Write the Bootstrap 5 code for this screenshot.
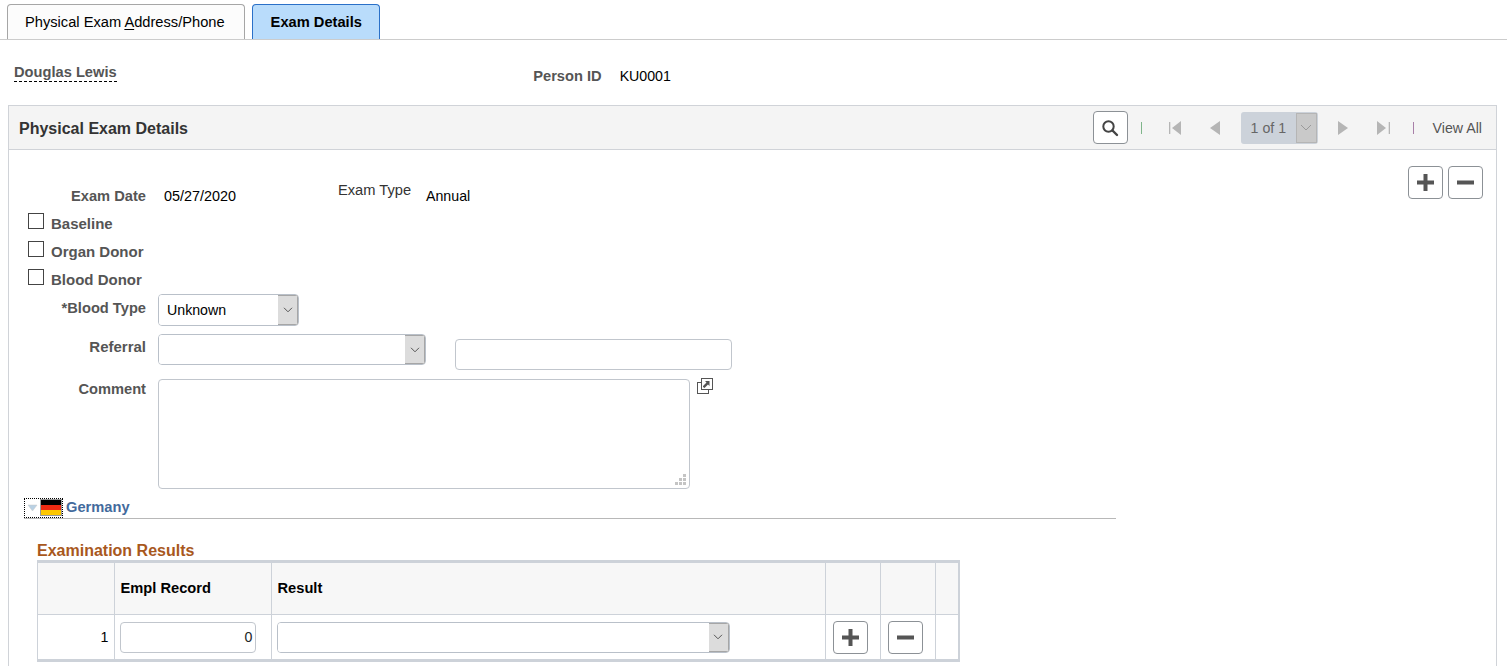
<!DOCTYPE html>
<html lang="en">
<head>
<meta charset="utf-8">
<title>Exam Details</title>
<link href="https://cdn.jsdelivr.net/npm/bootstrap@5.3.0/dist/css/bootstrap.min.css" rel="stylesheet">
<style>
html,body{height:666px;overflow:hidden}
body{font-family:"Liberation Sans",Arial,sans-serif;font-size:14.67px;color:#000;background:#fff;line-height:16px}
.tabbar{height:40px;border-bottom:1px solid #ccc;padding:4px 0 0 7px;gap:7px}
.tabitem{height:35px;border:1px solid #a6a6a6;border-bottom:0;border-radius:4px 4px 0 0;background:#fcfcfc;color:#000;padding:9px 19px 0 17px;text-decoration:none}
.tabitem.on{background:#b9dcfb;border-color:#2a70c8;font-weight:700;padding:9px 17px 0 18px}
.tabitem u{text-underline-offset:2px}
.idrow{height:65px;position:relative}
.pname{margin:24px 0 0 14px;font-weight:700;color:#555;border-bottom:1px dashed #000;height:18px;line-height:17px}
.idlabel{width:485px;margin-top:28px;text-align:right;font-weight:700;color:#555}
.idval{margin:28px 0 0 18px;font-size:14.2px}
.panelbox{margin:0 10px 0 8px;border:1px solid #d0d3d8;border-bottom:0;height:561px}
.panelhead{height:44px;background:#f4f4f4;border-bottom:1px solid #d0d3d8;padding-left:10px}
.paneltitle{font-weight:700;font-size:16px;color:#333;margin-top:3px}
.sqbtn{width:35px;height:33px;border:1px solid #8c9196;border-radius:4px;background:#fff;padding:0;display:flex;align-items:center;justify-content:center}
.pager{padding-right:14px;color:#777;height:44px;font-size:14.2px}
.sep{width:1px;height:12px;display:block}
.pagebox{width:77px;height:32px;background:#ccd2da;border-radius:3px;padding-left:10px;color:#666}
.pagearrow{width:21px;height:30px;background:#c9c9c9;border:1px solid #b5b5b5;margin-left:auto;margin-right:1px;display:flex;align-items:center;justify-content:center}
.viewall{color:#555;margin-left:19px}
.bodywrap{padding-right:13px}
.lab{width:137px;text-align:right;font-weight:700;color:#555;flex:none}
.rowdate{margin-top:37px;height:18px}
.dateval{margin-left:18px;width:72px;font-size:14.4px}
.typelab{margin:-13px 0 0 102px;color:#333;width:73px}
.typeval{margin-left:15px;font-size:14.2px}
.chkrow{height:28px;padding-left:19px;color:#555;font-weight:700;align-items:flex-start;font-size:15px}
.chkrow .form-check-input{width:16px;height:16px;margin:0 7px 0 0;border:1px solid #444;border-radius:0;flex:none;float:none}
.chkrow label{margin-top:3px}
.rowtype{height:32px;margin-top:0}
.fieldpick{border:1px solid #b9c0c9;border-radius:4px;overflow:hidden;margin-left:12px;background:#fff;flex-wrap:nowrap;align-items:stretch}
.fieldpick .form-control{border:0;border-radius:0;padding:0 0 0 8px;font-size:14.2px;line-height:1;background:#fff;box-shadow:none;color:#000;min-height:0}
.fieldpick .input-group-text{border:1px solid #a6a6a6;border-left-color:#8f8f8f;border-radius:0;background:#dcdcdc;padding:0;width:21px;justify-content:center}
.plainfield{border:1px solid #c1c6cd;border-radius:4px;min-height:0;padding:0 5px;font-size:14.2px;box-shadow:none}
.rowref{margin-top:8px;height:36px}
.rowcomment{margin-top:9px;height:110px}
.areabox{margin-left:12px;width:532px;height:110px;border:1px solid #c1c6cd;border-radius:4px;position:relative;flex:none}
.grip{position:absolute;right:3px;bottom:3px}
.germany{margin:9px 0 0 15px;width:1092px;height:21px;border-bottom:1px solid #b8b8b8;position:relative}
.flagfocus{border:1px dotted #000;width:39px;height:20px;padding:0 0 0 2px;gap:2px;flex:none}
.germanytext{color:#436a9c;font-weight:700;margin:1px 0 0 3px;height:16px}
.sectiontitle{margin:23px 0 0 28px;font-weight:700;font-size:16px;color:#a8581d;height:18px;line-height:17px}
.grid-wrap{margin-left:28px;width:923px;border:1px solid #cdd2d9;border-width:2px 2px 2px 1px;background:#fff}
.gridtbl{border-collapse:collapse;table-layout:fixed;width:920px}
.gridtbl th,.gridtbl td{border:1px solid #cdd2d9;padding:0}
.gridtbl tr>*:first-child{border-left:0}
.gridtbl thead tr{height:52px;background:#f7f7f7}
.gridtbl thead th{padding:0 0 2px 6px;color:#000;font-weight:700}
.gridtbl tbody tr{height:45px}
.gridtbl .numcell{text-align:right;padding-right:5px;font-size:14.2px}
.numfield{width:136px;height:31px;text-align:right;margin-left:5px;padding-right:2px}
.gridpick{margin:0 0 0 5px;width:453px;height:31px}
.cellbtn{margin:0 0 0 7px}
</style>
</head>
<body>
<div class="tabbar d-flex">
  <a class="tabitem" href="#">Physical Exam <u>A</u>ddress/Phone</a>
  <a class="tabitem on" href="#">Exam Details</a>
</div>

<div class="idrow d-flex">
  <div class="pname">Douglas Lewis</div>
  <div class="idlabel">Person ID</div>
  <div class="idval">KU0001</div>
</div>

<div class="panelbox">
  <div class="panelhead d-flex align-items-center justify-content-between">
    <div class="paneltitle">Physical Exam Details</div>
    <div class="pager d-flex align-items-center">
      <button class="sqbtn" type="button" aria-label="Search">
        <svg width="18" height="18" viewBox="0 0 18 18"><circle cx="7.5" cy="7.5" r="5.2" fill="none" stroke="#444" stroke-width="2"/><path d="M11.5 11.5 16 16" stroke="#444" stroke-width="2.4" stroke-linecap="round"/></svg>
      </button>
      <span class="sep" style="background:#7fb58a;margin-left:13px"></span>
      <svg style="margin-left:27px" width="13" height="14" viewBox="0 0 13 14"><path d="M0 1h1.300v12H0z" fill="#b5b5b5"/><path d="M12 0v14L3 7z" fill="#b5b5b5"/></svg>
      <svg style="margin-left:28px" width="10" height="14" viewBox="0 0 10 14"><path d="M10 0v14L0 7z" fill="#b5b5b5"/></svg>
      <div class="pagebox d-flex align-items-center" style="margin-left:21px">1 of 1
        <span class="pagearrow"><svg width="12" height="7" viewBox="0 0 12 7"><path d="M1 1l5 5 5-5" fill="none" stroke="#9a9a9a"/></svg></span>
      </div>
      <svg style="margin-left:20px" width="10" height="14" viewBox="0 0 10 14"><path d="M0 0v14l10-7z" fill="#b5b5b5"/></svg>
      <svg style="margin-left:29px" width="13" height="14" viewBox="0 0 13 14"><path d="M0 0v14l9-7z" fill="#b5b5b5"/><path d="M11.700 1H13v12h-1.300z" fill="#b5b5b5"/></svg>
      <span class="sep" style="background:#a87fa8;margin-left:23px"></span>
      <span class="viewall">View All</span>
    </div>
  </div>

  <div class="d-flex justify-content-between bodywrap">
    <div>
      <div class="rowdate d-flex align-items-center">
        <span class="lab">Exam Date</span>
        <span class="dateval">05/27/2020</span>
        <span class="typelab text-nowrap">Exam Type</span>
        <span class="typeval">Annual</span>
      </div>
      <div style="height:8px"></div>
      <div class="chkrow d-flex"><input class="form-check-input" type="checkbox" id="c1"><label for="c1">Baseline</label></div>
      <div class="chkrow d-flex"><input class="form-check-input" type="checkbox" id="c2"><label for="c2">Organ Donor</label></div>
      <div class="chkrow d-flex" style="height:25px"><input class="form-check-input" type="checkbox" id="c3"><label for="c3">Blood Donor</label></div>
      <div class="rowtype d-flex">
        <span class="lab" style="padding-top:6px">*Blood Type</span>
        <div class="input-group fieldpick" style="width:141px">
          <input class="form-control" value="Unknown" aria-label="Blood Type">
          <span class="input-group-text"><svg width="10" height="6" viewBox="0 0 10 6"><path d="M1 .8l4 4 4-4" fill="none" stroke="#555"/></svg></span>
        </div>
      </div>
      <div class="rowref d-flex">
        <span class="lab" style="padding-top:5px;font-size:15px">Referral</span>
        <div class="input-group fieldpick" style="width:268px;height:31px">
          <input class="form-control" aria-label="Referral">
          <span class="input-group-text"><svg width="10" height="6" viewBox="0 0 10 6"><path d="M1 .8l4 4 4-4" fill="none" stroke="#555"/></svg></span>
        </div>
        <input class="form-control plainfield" style="width:277px;height:31px;margin:5px 0 0 29px" aria-label="Referral text">
      </div>
      <div class="rowcomment d-flex">
        <span class="lab" style="padding-top:2px">Comment</span>
        <div class="areabox">
          <svg class="grip" width="11" height="11" viewBox="0 0 11 11"><path d="M8 0h3v3H8zM4 4h3v3H4zM8 4h3v3H8zM0 8h3v3H0zM4 8h3v3H4zM8 8h3v3H8z" fill="#c4c4c4"/></svg>
        </div>
        <svg style="margin:-1px 0 0 7px" width="16" height="16" viewBox="0 0 16 16"><rect x=".5" y="4.500" width="11" height="11" fill="#fff" stroke="#555"/><rect x="4.500" y=".5" width="11" height="11" fill="#fff" stroke="#555"/><path d="M6 9l1.500 1L11 6.500l1.500 1.500V3H8l1.500 1.500L6 8z" fill="#555"/></svg>
      </div>
    </div>
    <div class="d-flex" style="gap:5px;margin-top:16px;height:33px">
      <button class="sqbtn" type="button" aria-label="Add"><svg width="17" height="17" viewBox="0 0 17 17"><path d="M6.500 0h4v6.500H17v4h-6.500V17h-4v-6.500H0v-4h6.500z" fill="#555"/></svg></button>
      <button class="sqbtn" type="button" aria-label="Remove"><svg width="17" height="5" viewBox="0 0 17 5"><rect width="17" height="4" y=".5" fill="#555"/></svg></button>
    </div>
  </div>

  <div class="germany d-flex">
    <div class="flagfocus d-flex">
      <svg width="11" height="14" viewBox="0 0 11 14" style="margin-top:1px"><path d="M1 5h9L5.500 11z" fill="#b9d1e4" stroke="#c9c9c9" stroke-width=".5"/></svg>
      <svg width="22" height="17" viewBox="0 0 22 17"><rect width="22" height="17" fill="#999"/><rect x="1" y="1" width="20" height="5" fill="#000"/><rect x="1" y="6" width="20" height="5" fill="#ee2a12"/><rect x="1" y="11" width="20" height="5" fill="#fdc700"/></svg>
    </div>
    <span class="germanytext">Germany</span>
  </div>

  <div class="sectiontitle">Examination Results</div>
  <div class="grid-wrap">
    <table class="gridtbl">
      <colgroup><col style="width:76px"><col style="width:157px"><col style="width:554px"><col style="width:55px"><col style="width:55px"><col style="width:23px"></colgroup>
      <thead>
        <tr><th></th><th>Empl Record</th><th>Result</th><th></th><th></th><th></th></tr>
      </thead>
      <tbody>
        <tr>
          <td class="numcell">1</td>
          <td><input class="form-control plainfield numfield" value="0" aria-label="Empl Record"></td>
          <td>
            <div class="input-group fieldpick gridpick">
              <input class="form-control" aria-label="Result">
              <span class="input-group-text"><svg width="10" height="6" viewBox="0 0 10 6"><path d="M1 .8l4 4 4-4" fill="none" stroke="#555"/></svg></span>
            </div>
          </td>
          <td><button class="sqbtn cellbtn" type="button" aria-label="Add row"><svg width="17" height="17" viewBox="0 0 17 17"><path d="M6.500 0h4v6.500H17v4h-6.500V17h-4v-6.500H0v-4h6.500z" fill="#555"/></svg></button></td>
          <td><button class="sqbtn cellbtn" type="button" aria-label="Delete row"><svg width="17" height="5" viewBox="0 0 17 5"><rect width="17" height="4" y=".5" fill="#555"/></svg></button></td>
          <td></td>
        </tr>
      </tbody>
    </table>
  </div>
</div>
<script src="https://cdn.jsdelivr.net/npm/bootstrap@5.3.0/dist/js/bootstrap.bundle.min.js"></script>
</body>
</html>
